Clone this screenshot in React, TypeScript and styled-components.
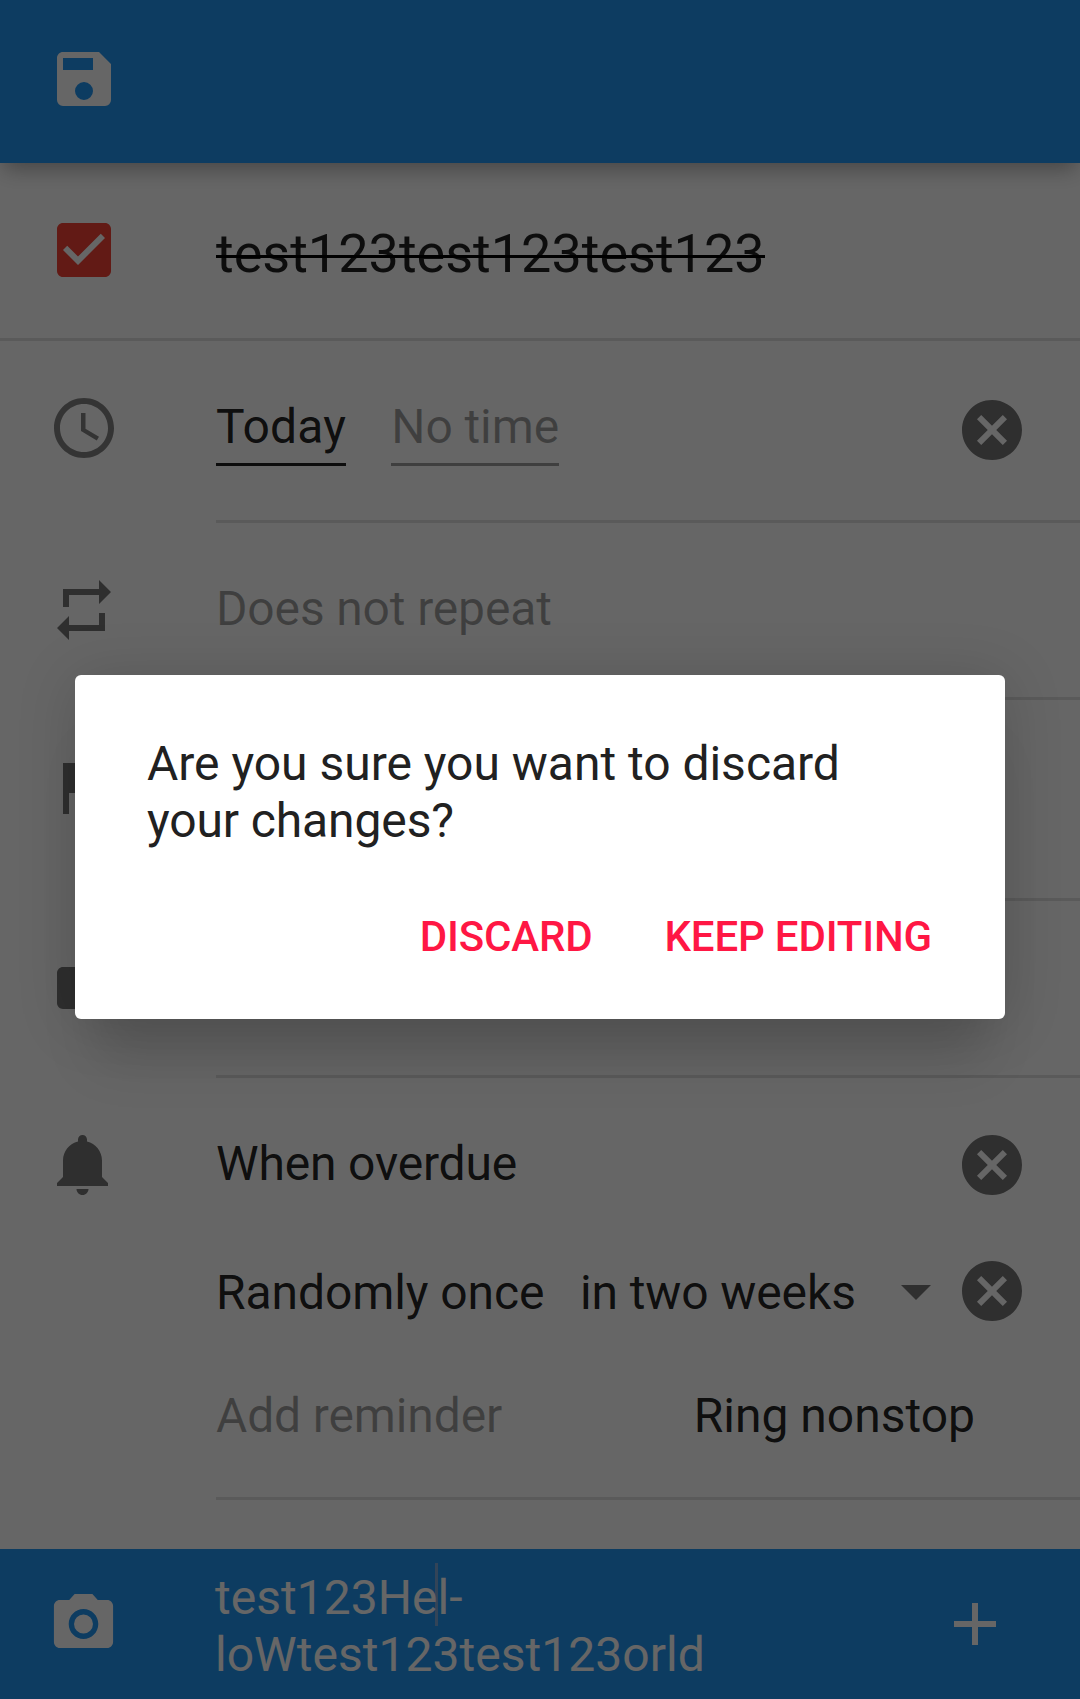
import React from "react";
import styled, { createGlobalStyle } from "styled-components";

const GlobalStyle = createGlobalStyle`
  *, *::before, *::after { box-sizing: border-box; }
  html, body { margin: 0; padding: 0; background: #fff; }
  body { font-family: Roboto, "Liberation Sans", sans-serif; -webkit-font-smoothing: antialiased; }
  button { font: inherit; border: 0; background: none; padding: 0; margin: 0; }
`;

const color = {
  primary: "#2196f3",
  accent: "#ff1744",
  danger: "#f44336",
  text: "rgba(0, 0, 0, 0.87)",
  hint: "rgba(0, 0, 0, 0.38)",
  icon: "rgba(0, 0, 0, 0.54)",
  divider: "rgba(0, 0, 0, 0.12)",
};

const paths = {
  save: "M15,9H5V5H15M12,19A3,3 0 0,1 9,16A3,3 0 0,1 12,13A3,3 0 0,1 15,16A3,3 0 0,1 12,19M17,3H5C3.89,3 3,3.9 3,5V19A2,2 0 0,0 5,21H19A2,2 0 0,0 21,19V7L17,3Z",
  checkBox:
    "M19 3H5c-1.11 0-2 .9-2 2v14c0 1.1.89 2 2 2h14c1.11 0 2-.9 2-2V5c0-1.1-.89-2-2-2zm-9 14l-5-5 1.41-1.41L10 14.17l7.59-7.59L19 8l-9 9z",
  clock:
    "M11.99 2C6.47 2 2 6.48 2 12s4.47 10 9.99 10C17.52 22 22 17.52 22 12S17.52 2 11.99 2zM12 20c-4.42 0-8-3.58-8-8s3.58-8 8-8 8 3.58 8 8-3.58 8-8 8zm.5-13H11v6l5.25 3.15.75-1.23-4.5-2.67z",
  repeat: "M7 7h10v3l4-4-4-4v3H5v6h2V7zm10 10H7v-3l-4 4 4 4v-3h12v-6h-2v4z",
  flag: "M14.4 6L14 4H5v17h2v-7h5.6l.4 2h7V6z",
  label:
    "M17.63 5.84C17.27 5.33 16.67 5 16 5L5 5.01C3.9 5.01 3 5.9 3 7v10c0 1.1.9 1.99 2 1.99L16 19c.67 0 1.27-.33 1.63-.84L22 12l-4.37-6.16z",
  bell: "M11.5 22c1.1 0 2-.9 2-2h-4c0 1.1.9 2 2 2zm6.5-6v-5.5c0-3.07-2.13-5.64-5-6.32V3.5c0-.83-.67-1.5-1.5-1.5S10 2.67 10 3.5v.68c-2.87.68-5 3.25-5 6.32V16l-2 2v1h17v-1l-2-2z",
  cancel:
    "M12 2C6.47 2 2 6.47 2 12s4.47 10 10 10 10-4.47 10-10S17.53 2 12 2zm5 13.59L15.59 17 12 13.41 8.41 17 7 15.59 10.59 12 7 8.41 8.41 7 12 10.59 15.59 7 17 8.41 13.41 12 17 15.59z",
  dropDown: "M7 10l5 5 5-5z",
  camera:
    "M12 8.8a3.2 3.2 0 1 0 0 6.4a3.2 3.2 0 1 0 0-6.4zM9 2L7.17 4H4c-1.1 0-2 .9-2 2v12c0 1.1.9 2 2 2h16c1.1 0 2-.9 2-2V6c0-1.1-.9-2-2-2h-3.17L15 2H9zm3 15c-2.76 0-5-2.24-5-5s2.24-5 5-5 5 2.24 5 5-2.24 5-5 5z",
  add: "M19 13h-6v6h-2v-6H5v-2h6V5h2v6h6v2z",
};

const Svg = styled.svg<{ $fill: string; $width: number }>`
  display: block;
  flex: none;
  width: ${(p) => p.$width}px;
  height: 72px;
  fill: ${(p) => p.$fill};
`;

interface IconProps {
  name: keyof typeof paths;
  fill?: string;
  opacity?: number;
  width?: number;
}

const Icon = ({ name, fill = color.icon, opacity = 1, width = 72 }: IconProps) => (
  <Svg $fill={fill} $width={width} viewBox="0 0 24 24" preserveAspectRatio="none" aria-hidden="true">
    <path d={paths[name]} fillOpacity={opacity} />
  </Svg>
);

const Screen = styled.div`
  position: relative;
  display: flex;
  flex-direction: column;
  width: 1080px;
  height: 1699px;
  overflow: hidden;
  background: #fff;
`;

const Toolbar = styled.header`
  flex: none;
  height: 163px;
  padding: 43px 48px 0;
  background: ${color.primary};
  box-shadow: 0 10px 20px -4px rgba(0, 0, 0, 0.32);
`;

const Form = styled.main`
  flex: 1;
`;

const Row = styled.section<{ $height: number; $full?: boolean }>`
  display: grid;
  grid-template-columns: 216px 1fr;
  grid-template-rows: 100%;
  height: ${(p) => p.$height}px;
  border-bottom: ${(p) => (p.$full ? `3px solid ${color.divider}` : "0")};
`;

const Lead = styled.div`
  padding: 51px 0 0 48px;
`;

const Body = styled.div<{ $line?: boolean }>`
  padding: 51px 52px 0 0;
  border-bottom: ${(p) => (p.$line ? `3px solid ${color.divider}` : "0")};
`;

const Line = styled.div<{ $height?: number }>`
  display: flex;
  align-items: flex-start;
  height: ${(p) => (p.$height ? `${p.$height}px` : "auto")};
`;

const Label = styled.span<{ $top?: number; $hint?: boolean; $tracking?: number }>`
  margin-top: ${(p) => p.$top ?? 6}px;
  font-size: 48px;
  line-height: 57px;
  letter-spacing: ${(p) => p.$tracking ?? 0}px;
  white-space: nowrap;
  color: ${(p) => (p.$hint ? color.hint : color.text)};
`;

const Field = styled(Label)`
  padding-bottom: 8px;
  margin-right: 45px;
  border-bottom: 3px solid currentColor;
`;

const Title = styled.span`
  position: relative;
  margin-top: 8px;
  font-size: 54px;
  line-height: 63px;
  color: ${color.text};
  &::after {
    content: "";
    position: absolute;
    left: 0;
    right: 0;
    top: 33px;
    height: 3px;
    background: #000;
  }
`;

const Spinner = styled.div`
  display: flex;
  align-items: flex-start;
  justify-content: space-between;
  width: 372px;
  margin-left: auto;
  margin-right: 4px;
`;

const IconButton = styled.button<{ $top?: number; $push?: boolean }>`
  margin-top: ${(p) => p.$top ?? 0}px;
  margin-left: ${(p) => (p.$push ? "auto" : "0")};
`;

const RingMode = styled(Label)`
  margin-left: auto;
  margin-right: 53px;
`;

const CommentBar = styled.footer`
  display: grid;
  grid-template-columns: 215px 1fr auto;
  flex: none;
  height: 150px;
  padding-right: 69px;
  background: ${color.primary};
`;

const BarIcon = styled.div<{ $left?: number }>`
  padding-top: 39px;
  padding-left: ${(p) => p.$left ?? 0}px;
`;

const Comment = styled.div`
  padding-top: 20px;
  font-size: 48px;
  line-height: 57px;
  letter-spacing: 0.03px;
  color: #fff;
`;

const Caret = styled.span`
  position: relative;
  &::after {
    content: "";
    position: absolute;
    left: -2.5px;
    top: -6px;
    width: 3px;
    height: 63px;
    background: rgba(255, 200, 190, 0.42);
  }
`;

const Scrim = styled.div`
  position: absolute;
  inset: 0;
  display: flex;
  align-items: flex-start;
  justify-content: center;
  padding-top: 675px;
  background: rgba(0, 0, 0, 0.6);
`;

const Dialog = styled.div`
  width: 930px;
  height: 344px;
  padding: 60px 72px 0;
  border-radius: 6px;
  background: #fff;
  box-shadow: 0 60px 50px -20px rgba(0, 0, 0, 0.13), 0 4px 60px rgba(0, 0, 0, 0.16);
`;

const Message = styled.p`
  margin: 0;
  font-size: 48px;
  line-height: 57px;
  letter-spacing: -0.12px;
  color: #212121;
  &::first-line {
    letter-spacing: -0.02px;
  }
`;

const Actions = styled.div`
  display: flex;
  justify-content: flex-end;
  gap: 72px;
  margin-top: 63px;
  padding-right: 1px;
`;

const Action = styled.button`
  font-size: 42px;
  font-weight: 500;
  line-height: 49px;
  letter-spacing: -0.17px;
  text-transform: uppercase;
  color: ${color.accent};
`;

export default function App() {
  return (
    <>
      <GlobalStyle />
      <Screen>
        <Toolbar>
          <Icon name="save" fill="#fff" />
        </Toolbar>
        <Form>
          <Row $height={178} $full>
            <Lead>
              <Icon name="checkBox" fill={color.danger} />
            </Lead>
            <Body>
              <Line>
                <Title>test123test123test123</Title>
              </Line>
            </Body>
          </Row>
          <Row $height={182}>
            <Lead>
              <Icon name="clock" opacity={0.9} />
            </Lead>
            <Body $line>
              <Line>
                <Field $tracking={0.2}>Today</Field>
                <Field $hint $tracking={-0.1}>No time</Field>
                <IconButton $top={2} $push aria-label="Clear due date">
                  <Icon name="cancel" />
                </IconButton>
              </Line>
            </Body>
          </Row>
          <Row $height={177}>
            <Lead>
              <Icon name="repeat" />
            </Lead>
            <Body $line>
              <Line>
                <Label $hint $tracking={-0.15}>Does not repeat</Label>
              </Line>
            </Body>
          </Row>
          <Row $height={201}>
            <Lead>
              <Icon name="flag" />
            </Lead>
            <Body $line />
          </Row>
          <Row $height={177}>
            <Lead>
              <Icon name="label" />
            </Lead>
            <Body $line />
          </Row>
          <Row $height={422}>
            <Lead>
              <Icon name="bell" />
            </Lead>
            <Body $line>
              <Line $height={126}>
                <Label $tracking={-0.17}>When overdue</Label>
                <IconButton $push aria-label="Remove reminder">
                  <Icon name="cancel" />
                </IconButton>
              </Line>
              <Line $height={126}>
                <Label $top={9} $tracking={-0.08}>Randomly once</Label>
                <Spinner>
                  <Label $top={9} $tracking={-0.12}>in two weeks</Label>
                  <Icon name="dropDown" />
                </Spinner>
                <IconButton aria-label="Remove reminder">
                  <Icon name="cancel" />
                </IconButton>
              </Line>
              <Line>
                <Label $hint $tracking={-0.13}>Add reminder</Label>
                <RingMode>Ring nonstop</RingMode>
              </Line>
            </Body>
          </Row>
        </Form>
        <CommentBar>
          <BarIcon $left={48}>
            <Icon name="camera" fill="#fff" width={71} />
          </BarIcon>
          <Comment>
            test123He
            <Caret />
            l-
            <br />
            loWtest123test123orld
          </Comment>
          <BarIcon>
            <Icon name="add" fill="#fff" />
          </BarIcon>
        </CommentBar>
        <Scrim>
          <Dialog role="dialog">
            <Message>Are you sure you want to discard your changes?</Message>
            <Actions>
              <Action>Discard</Action>
              <Action>Keep editing</Action>
            </Actions>
          </Dialog>
        </Scrim>
      </Screen>
    </>
  );
}
